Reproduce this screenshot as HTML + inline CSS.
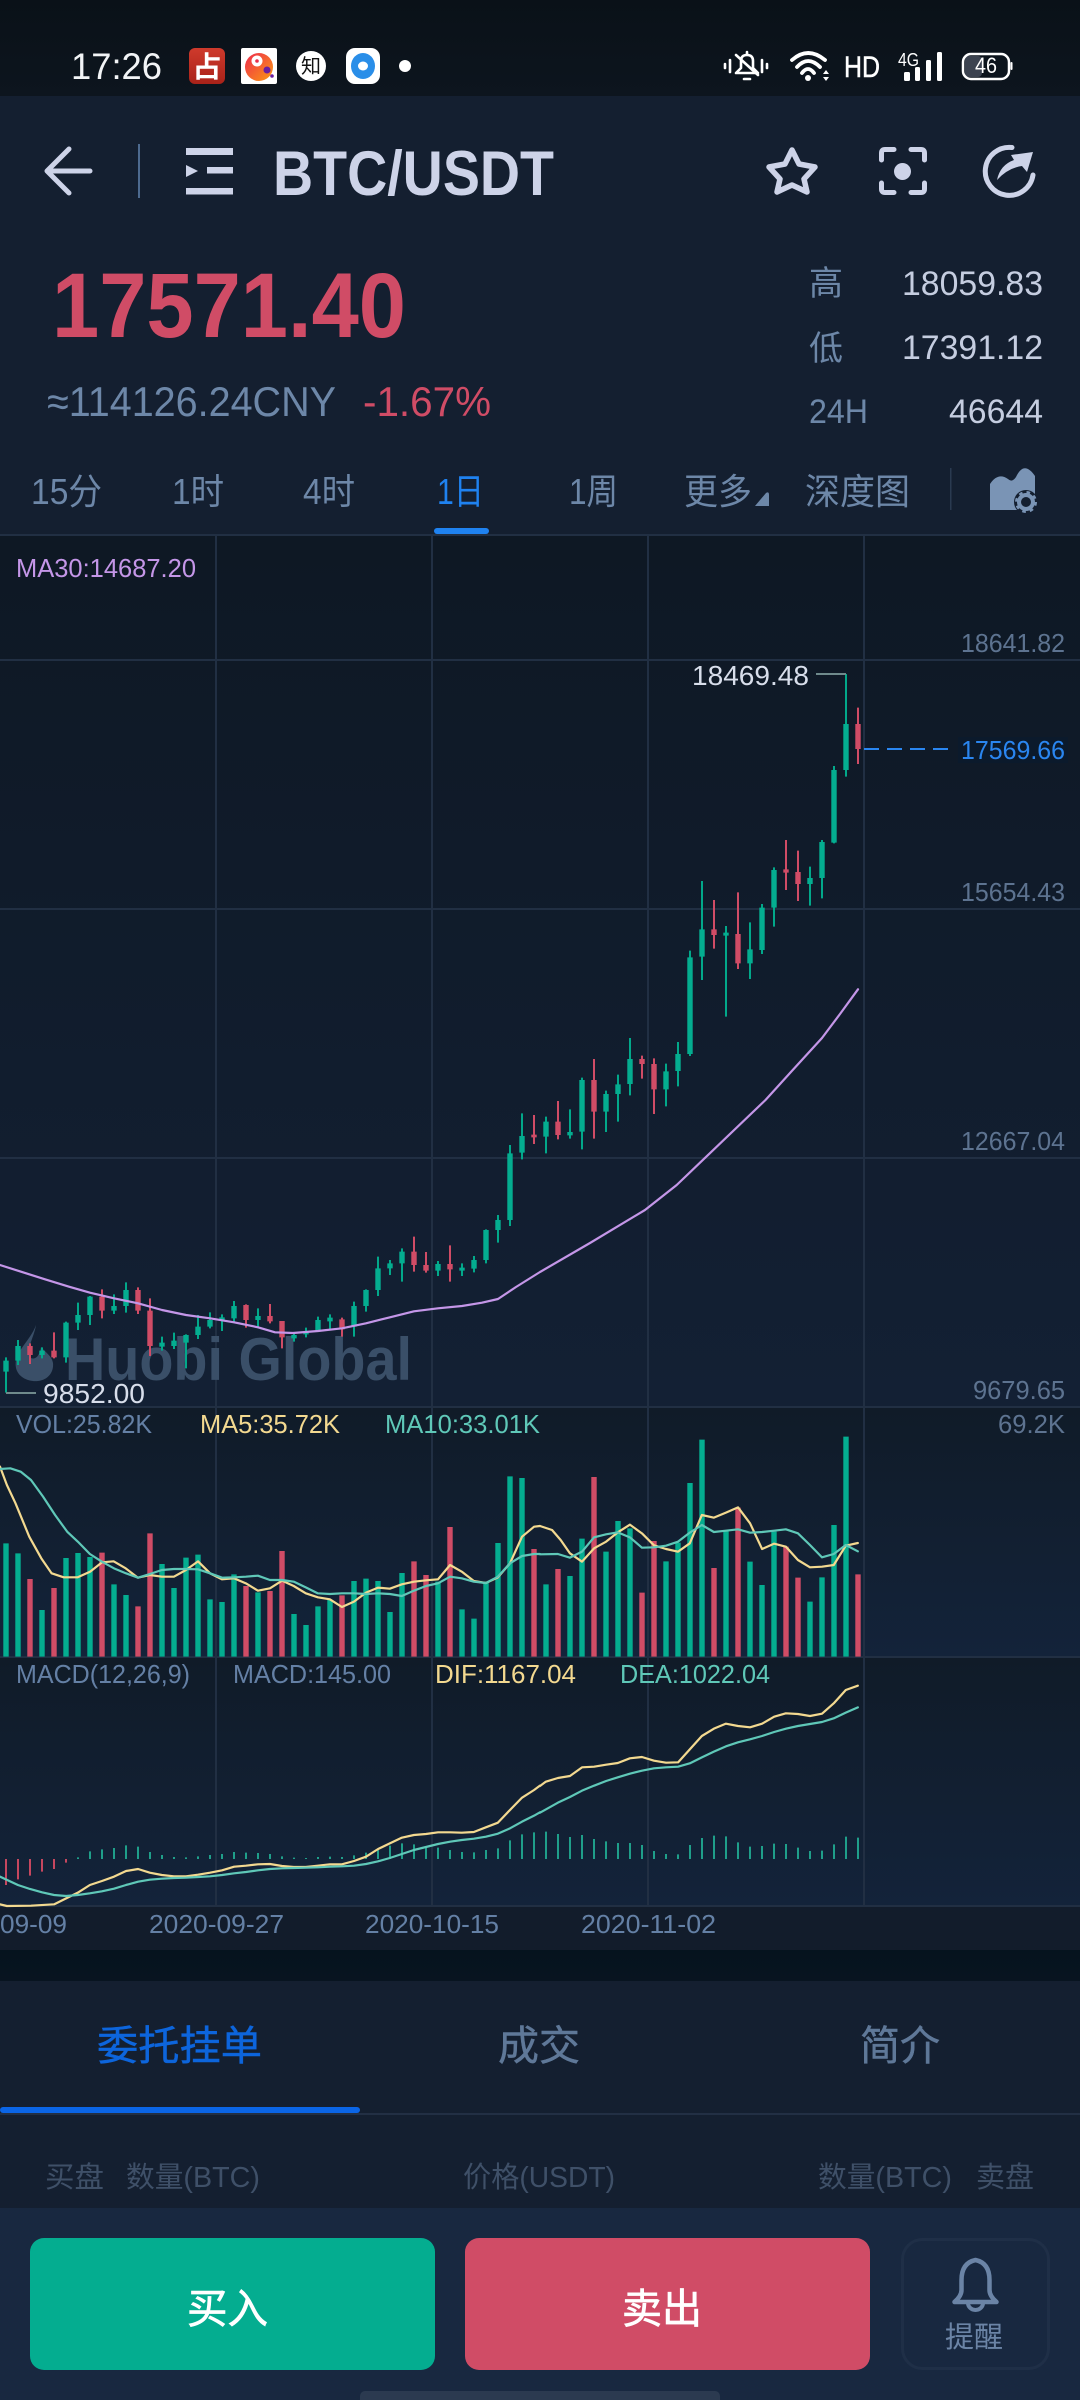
<!DOCTYPE html>
<html lang="zh-CN">
<head>
<meta charset="utf-8">
<title>BTC/USDT</title>
<style>
html,body{margin:0;padding:0;background:#141f30;width:1080px;height:2400px;overflow:hidden}
svg{display:block}
text{font-family:"Liberation Sans","Noto Sans CJK SC",sans-serif}
.ma{fill:none;stroke-width:2.2;stroke-linejoin:round;stroke-linecap:round;vector-effect:non-scaling-stroke}
</style>
</head>
<body>
<svg xmlns="http://www.w3.org/2000/svg" width="1080" height="2400" viewBox="0 0 1080 2400">
<defs>
<linearGradient id="gs" x1="0" y1="0" x2="0" y2="1"><stop offset="0" stop-color="#0a1118"/><stop offset="1" stop-color="#0d151e"/></linearGradient>
<linearGradient id="gc" x1="0" y1="0" x2="0" y2="1"><stop offset="0" stop-color="#0e1824"/><stop offset="1" stop-color="#132034"/></linearGradient>
<linearGradient id="gv" x1="0" y1="0" x2="0" y2="1"><stop offset="0" stop-color="#101b28"/><stop offset="1" stop-color="#13233a"/></linearGradient>
<linearGradient id="gb" x1="0" y1="0" x2="0" y2="1"><stop offset="0" stop-color="#05131e"/><stop offset="1" stop-color="#081420"/></linearGradient>
<linearGradient id="gr" x1="0" y1="0" x2="0" y2="1"><stop offset="0" stop-color="#cf3a2c"/><stop offset="1" stop-color="#a92219"/></linearGradient>
<linearGradient id="go" x1="0" y1="0" x2="1" y2="1"><stop offset="0" stop-color="#ee2a4e"/><stop offset="1" stop-color="#fb9a12"/></linearGradient>
</defs>

<!-- backgrounds -->
<rect width="1080" height="96" fill="url(#gs)"/>
<rect y="96" width="1080" height="439" fill="#141f30"/>
<rect y="535" width="1080" height="872" fill="url(#gc)"/>
<rect y="1407" width="1080" height="250" fill="url(#gv)"/>
<rect y="1657" width="1080" height="249" fill="url(#gv)"/>
<rect y="1906" width="1080" height="44" fill="#121c2b"/>
<rect y="1950" width="1080" height="31" fill="url(#gb)"/>
<rect y="1981" width="1080" height="227" fill="#141f30"/>
<rect y="2208" width="1080" height="192" fill="#182840"/>

<!-- status bar -->
<text x="71" y="79" font-size="37" fill="#f2f4f6" textLength="91" lengthAdjust="spacingAndGlyphs">17:26</text>
<rect x="189" y="48" width="36" height="36" rx="6" fill="url(#gr)"/>
<text x="207" y="77" font-size="29" font-weight="700" fill="#fff" text-anchor="middle">占</text>
<rect x="241" y="48" width="36" height="36" rx="2" fill="#fff"/>
<circle cx="259" cy="67" r="14" fill="url(#go)"/>
<circle cx="257" cy="61" r="5.5" fill="#fff"/><circle cx="257" cy="61" r="1.8" fill="#e8304a"/>
<circle cx="267" cy="70" r="3.5" fill="#6a1fa0"/><circle cx="272" cy="76" r="1.8" fill="#6a1fa0"/>
<circle cx="311" cy="66" r="15" fill="#fff"/>
<text x="311" y="73" font-size="20" fill="#111" text-anchor="middle">知</text>
<rect x="346" y="48" width="34" height="36" rx="9" fill="#fff"/>
<ellipse cx="363" cy="66" rx="12" ry="13" fill="#2a8ee8"/><ellipse cx="363" cy="66" rx="5" ry="4.5" fill="#fff"/>
<circle cx="405" cy="66" r="6" fill="#fff"/>

<g fill="none" stroke="#fff" stroke-width="2.6" stroke-linecap="round" stroke-linejoin="round">
<path d="M725 64V68M730 60V72M762 60V72M767 64V68"/>
<path d="M736 73L741 68V61Q741 55 747 55Q753 55 753 61V68L758 73Z"/>
<path d="M747 52V54M744 79H750"/>
<path d="M736 55L758 75"/>
</g>
<g fill="none" stroke="#fff" stroke-width="3.8" stroke-linecap="round">
<path d="M792 60Q808 46 825 60"/><path d="M797 67Q808 55 820 67"/><path d="M802 73Q808 65 814 73"/>
</g>
<circle cx="808" cy="78" r="3" fill="#fff"/>
<path d="M823 74L826 70L829 74ZM823 77H829L826 81Z" fill="#fff"/>
<text x="844" y="77" font-size="30" fill="#fff" stroke="#fff" stroke-width=".5" textLength="36" lengthAdjust="spacingAndGlyphs">HD</text>
<text x="898" y="66" font-size="18" fill="#fff" textLength="21" lengthAdjust="spacingAndGlyphs">4G</text>
<g fill="#fff"><rect x="904" y="72" width="6" height="9" rx="1.5"/><rect x="915" y="67" width="5" height="14" rx="1.5"/><rect x="926" y="60" width="5" height="21" rx="1.5"/><rect x="937" y="52" width="5" height="29" rx="1.5"/></g>
<rect x="965" y="56" width="17" height="21" rx="4" fill="#3c4350"/>
<rect x="963" y="54" width="46" height="25" rx="8" fill="none" stroke="#fff" stroke-width="2.5"/>
<rect x="1010.500" y="62" width="2" height="8" rx="1" fill="#fff"/>
<text x="975" y="73" font-size="22" fill="#fff" textLength="22" lengthAdjust="spacingAndGlyphs">46</text>

<!-- header -->
<g fill="none" stroke="#cdd3e8" stroke-width="5" stroke-linecap="round" stroke-linejoin="round">
<path d="M69 149L47 171L69 193M47 171H90"/>
<path stroke-width="5.500" d="M792 150L799 164L815 167L804 179L807 192L792 185L777 192L780 179L769 167L785 164Z"/>
<path d="M881.500 160V153q0-3.500 3.500-3.500H894M911 149.500H921q3.500 0 3.500 3.500V160M924.500 183V189q0 3.500-3.500 3.500H911M894 192.500H885q-3.500 0-3.500-3.500V183"/>
<path d="M1012 147.500A24 24 0 1 0 1033 175"/>
</g>
<rect x="138" y="144" width="2" height="54" fill="#4d6a8f"/>
<g fill="#cdd3e8">
<rect x="186" y="148" width="47" height="7"/><rect x="207" y="167" width="26" height="6.500"/><rect x="186" y="188" width="47" height="6.500"/>
<path d="M186 165L198 171L186 177Z"/>
<circle cx="902.500" cy="171.500" r="8.500"/>
<path d="M997 180Q1000 165 1014 160L1011 155L1033 152L1027 172L1022 166Q1008 168 997 180Z"/>
</g>
<text x="273" y="195" font-size="63" font-weight="700" fill="#cdd3e8" textLength="281" lengthAdjust="spacingAndGlyphs">BTC/USDT</text>

<text x="52" y="337" font-size="92" font-weight="700" fill="#d04c66" textLength="354" lengthAdjust="spacingAndGlyphs">17571.40</text>
<text x="47" y="416" font-size="42" fill="#6d87a8" textLength="289" lengthAdjust="spacingAndGlyphs">≈114126.24CNY</text>
<text x="363" y="416" font-size="42" fill="#d04c66" textLength="128" lengthAdjust="spacingAndGlyphs">-1.67%</text>

<text x="809" y="295" font-size="34" fill="#6d87a8">高</text>
<text x="809" y="360" font-size="34" fill="#6d87a8">低</text>
<text x="809" y="423" font-size="34" fill="#6d87a8" textLength="59" lengthAdjust="spacingAndGlyphs">24H</text>
<text x="902" y="295" font-size="34" fill="#c5cde0" textLength="141" lengthAdjust="spacingAndGlyphs">18059.83</text>
<text x="902" y="359" font-size="34" fill="#c5cde0" textLength="141" lengthAdjust="spacingAndGlyphs">17391.12</text>
<text x="949" y="423" font-size="34" fill="#c5cde0" textLength="94" lengthAdjust="spacingAndGlyphs">46644</text>

<!-- period tabs -->
<g font-size="36" fill="#6d87a8">
<text x="31" y="504" textLength="71" lengthAdjust="spacingAndGlyphs">15分</text>
<text x="172" y="504" textLength="52" lengthAdjust="spacingAndGlyphs">1时</text>
<text x="303" y="504" textLength="52" lengthAdjust="spacingAndGlyphs">4时</text>
<text x="437" y="504" fill="#1f82f0" textLength="47" lengthAdjust="spacingAndGlyphs">1日</text>
<text x="569" y="504" textLength="49" lengthAdjust="spacingAndGlyphs">1周</text>
<text x="684" y="504" textLength="68" lengthAdjust="spacingAndGlyphs">更多</text>
<text x="805" y="504" textLength="105" lengthAdjust="spacingAndGlyphs">深度图</text>
</g>
<path d="M755 506L766 493Q769 491 769 495V506Z" fill="#6d87a8"/>
<rect x="950" y="468" width="1.500" height="42" fill="#2a3a50"/>
<path d="M990 510V484Q998 472 1008 479Q1012 483 1016 477Q1024 460 1035 476V495L1018 510Z" fill="#7a94b5"/>
<circle cx="1026" cy="502" r="12" fill="#141f30"/>
<circle cx="1026" cy="502" r="7" fill="none" stroke="#7a94b5" stroke-width="4"/>
<circle cx="1026" cy="502" r="9.500" fill="none" stroke="#7a94b5" stroke-width="3" stroke-dasharray="3.500 4"/>
<rect x="434" y="528" width="55" height="6" rx="3" fill="#1f82f0"/>

<!-- grid -->
<g stroke="#212f43" stroke-width="2" fill="none">
<path d="M0 535H1080M0 660H1080M0 909H1080M0 1158H1080M0 1407H1080M0 1657H1080M0 1906H1080"/>
<path d="M216 535V1906M432 535V1906M648 535V1906M864 535V1906"/>
</g>

<!-- watermark -->
<path d="M36 1325C30 1342 13 1352 16 1368C18 1377 28 1382 38 1381C48 1380 54 1372 53 1363C52 1356 45 1352 41 1347C40 1355 36 1360 31 1358C25 1350 34 1338 36 1325Z" fill="#3a4f68"/>
<text x="65" y="1380" font-size="60" font-weight="700" fill="#3a4f68" textLength="347" lengthAdjust="spacingAndGlyphs">Huobi Global</text>

<!-- candles -->
<g transform="translate(0,1100) scale(1,.33333)" fill="none">
<path stroke="#02a88a" stroke-width="2" d="M6 772V878M18 720V795M42 742V775M66 665V788M78 608V690M90 588V675M114 583V642M126 547V638M162 710V752M174 698V747M186 703V805M198 645V717M210 637V685M222 643V693M234 603V665M258 625V680M294 700V725M306 683V712M318 650V695M330 643V690M354 605V710M366 568V635M378 470V588M390 480V525M402 445V545M438 483V528M462 490V528M474 468V517M486 388V490M498 345V428M510 135V378M522 40V178"/>
<path stroke="#04ad90" stroke-width="5.400" d="M6 782V815M18 738V782M42 752V765M66 668V772M78 645V668M90 590V645M114 618V632M126 570V618M162 728V740M174 722V738M186 705V728M198 680V705M210 660V680M222 652V662M234 618V655M258 648V660M294 705V715M306 695V703M318 660V692M330 653V664M354 618V680M366 570V618M378 505V570M390 490V505M402 455V490M438 492V512M462 503V512M474 480V506M486 390V480M498 360V390M510 160V360M522 108V158"/>
<path stroke="#d04c66" stroke-width="2" d="M30 730V792M54 697V775M102 568V655M138 562V642M150 595V768M246 613V683M270 612V670M282 663V745M342 653V710M414 410V515M426 456V518M450 436V545M534 45V132"/>
<path stroke="#d04c66" stroke-width="5.400" d="M30 738V765M54 752V772M102 590V632M138 570V632M150 632V738M246 615V660M270 648V664M282 663V712M342 658V688M414 455V495M426 495V512M450 492V508M534 104V112"/>
</g>
<g transform="translate(0,1040) scale(1,.33333)" fill="none">
<path stroke="#02a88a" stroke-width="2" d="M546 230V340M570 208V296M582 113V328M606 152V276M618 104V245M630 -6V166M666 71V199M678 6V139"/>
<path stroke="#04ad90" stroke-width="5.400" d="M546 245V290M570 276V286M582 120V275M606 162V215M618 133V162M630 57V132M666 94V148M678 42V93"/>
<path stroke="#d04c66" stroke-width="2" d="M558 183V298M594 57V296M642 47V116M654 55V222"/>
<path stroke="#d04c66" stroke-width="5.400" d="M558 245V285M594 120V215M642 57V72M654 72V148"/>
</g>
<g transform="translate(0,600) scale(1,.33333)" fill="none">
<path stroke="#02a88a" stroke-width="2" d="M690 1052V1368M702 843V1140M726 978V1250M750 967V1137M762 912V1062M774 802V980M810 800V917M822 720V895M834 498V730M846 222V530"/>
<path stroke="#04ad90" stroke-width="5.400" d="M690 1072V1362M702 988V1070M726 998V1007M750 1048V1090M762 923V1050M774 810V923M810 834V852M822 726V834M834 510V728M846 372V510"/>
<path stroke="#d04c66" stroke-width="2" d="M714 900V1046M738 877V1107M786 720V870M798 752V903M858 323V492"/>
<path stroke="#d04c66" stroke-width="5.400" d="M714 988V1005M738 1002V1090M786 808V818M798 816V852M858 372V447"/>
</g>

<!-- MA30 -->
<path class="ma" stroke="#c496e8" d="M0 1265L21 1271.700L45 1279.300L69 1286.700L90 1292.700L114 1298.300L138 1303.300L162 1310L186 1315L210 1318.300L234 1322.300L258 1327.300L275 1332.300L293 1333L318 1331L342 1328.300L366 1323.300L390 1317.300L414 1311.300L438 1308.300L462 1306L482 1302.700L498 1299L516 1287L540 1272L590 1243L645 1210L676.700 1185L700 1162.700L765.500 1100L790 1073L822 1038L840 1014L858 989.300"/>

<!-- hi/lo markers -->
<path d="M816 674H846" stroke="#6f8a8c" stroke-width="2" fill="none"/>
<path d="M6 1393H36" stroke="#6f8a8c" stroke-width="2" fill="none"/>
<text x="692" y="685" font-size="28" fill="#d8deeb" textLength="117" lengthAdjust="spacingAndGlyphs">18469.48</text>
<text x="43" y="1403" font-size="28" fill="#d8deeb" textLength="102" lengthAdjust="spacingAndGlyphs">9852.00</text>

<!-- axis labels -->
<text x="16" y="577" font-size="26" fill="#c496e8" textLength="180" lengthAdjust="spacingAndGlyphs">MA30:14687.20</text>
<g font-size="26" fill="#5d7390">
<text x="961" y="652" textLength="104" lengthAdjust="spacingAndGlyphs">18641.82</text>
<text x="961" y="901" textLength="104" lengthAdjust="spacingAndGlyphs">15654.43</text>
<text x="961" y="1150" textLength="104" lengthAdjust="spacingAndGlyphs">12667.04</text>
<text x="973" y="1399" textLength="92" lengthAdjust="spacingAndGlyphs">9679.65</text>
<text x="998" y="1433" textLength="67" lengthAdjust="spacingAndGlyphs">69.2K</text>
</g>
<rect x="958" y="737" width="110" height="26" fill="#0b1a2c"/>
<path d="M864 749H951" stroke="#2a86f0" stroke-width="2" stroke-dasharray="15 8" fill="none"/>
<text x="961" y="759" font-size="26" fill="#2a86f0" textLength="104" lengthAdjust="spacingAndGlyphs">17569.66</text>

<!-- volume -->
<g transform="translate(0,1400) scale(1,.33333)" fill="none" stroke-width="5.400">
<path stroke="#04ad90" d="M6 430V770M18 460V770M42 630V770M66 474V770M78 459V770M90 471V770M114 553V770M126 585V770M162 492V770M174 564V770M186 473V770M198 464V770M210 598V770M222 606V770M234 523V770M258 577V770M294 642V770M306 675V770M318 619V770M330 600V770M354 543V770M366 536V770M378 543V770M390 636V770M402 519V770M438 545V770M462 628V770M474 656V770M486 545V770M498 429V770M510 229V770M522 234V770M546 553V770M570 528V770M582 416V770M606 455V770M618 363V770M630 385V770M666 484V770M678 428V770M690 249V770M702 119V770M726 392V770M750 485V770M762 555V770M774 395V770M810 605V770M822 532V770M834 375V770M846 110V770"/>
<path stroke="#d04c66" d="M30 537V770M54 564V770M102 458V770M138 619V770M150 400V770M246 558V770M270 573V770M282 453V770M342 586V770M414 484V770M426 525V770M450 381V770M534 447V770M558 507V770M594 231V770M642 578V770M654 423V770M714 504V770M738 323V770M786 440V770M798 533V770M858 523V770"/>
</g>
<g transform="translate(0,1400) scale(.34435,.33333)">
<path class="ma" stroke="#f3d990" d="M0 200L20 255L45 310L85 410L120 475L150 520L185 532L225 532L262 515L296 487L330 484L365 505L400 533L435 525L470 530L505 530L540 510L575 484L610 520L645 538L680 535L714 550L749 572L784 565L819 542L853 558L888 580L923 592L958 598L993 621L1028 605L1063 578L1098 563L1132 566L1167 553L1202 545L1237 541L1272 538L1307 495L1341 515L1376 543L1411 549L1446 532L1481 490L1516 410L1551 380L1568 378"/>
<path class="ma" stroke="#5fc8b8" d="M0 207L30 205L60 215L90 240L125 290L160 345L195 395L226 425L261 462L296 485L331 505L366 520L401 533L435 522L470 510L505 507L540 507L575 508L610 520L645 533L680 532L714 530L749 527L784 540L819 540L853 545L888 562L923 580L958 582L993 580L1028 580L1063 582L1098 580L1132 582L1167 588L1202 572L1237 558L1272 550L1307 530L1341 535L1376 545L1411 549L1446 530L1481 490L1516 468L1551 462L1568 462"/>
</g>
<g transform="translate(540,1400) scale(.34435,.33333)">
<path class="ma" stroke="#f3d990" d="M0 378L35 390L60 420L87 460L122 485L157 445L192 425L226 397L261 374L296 400L331 436L366 447L401 455L435 430L470 345L505 353L540 338L575 322L610 370L645 447L680 431L714 440L749 480L784 502L819 500L853 495L888 437L923 429"/>
<path class="ma" stroke="#5fc8b8" d="M0 463L52 462L87 473L122 455L157 412L192 403L226 397L261 412L296 443L331 442L366 437L401 425L435 398L470 375L505 396L540 392L575 388L610 398L645 396L680 392L714 388L749 400L784 435L819 472L853 462L888 435L923 454"/>
</g>
<text x="16" y="1433" font-size="26" fill="#6480a5" textLength="136" lengthAdjust="spacingAndGlyphs">VOL:25.82K</text>
<text x="200" y="1433" font-size="26" fill="#f3d990" textLength="140" lengthAdjust="spacingAndGlyphs">MA5:35.72K</text>
<text x="385" y="1433" font-size="26" fill="#5fc8b8" textLength="155" lengthAdjust="spacingAndGlyphs">MA10:33.01K</text>

<!-- MACD -->
<g transform="translate(0,1650) scale(1,.33333)" fill="none" stroke-width="2">
<path stroke="#c6475f" d="M6 627V705M18 627V688M30 627V677M42 627V665M54 627V657M66 627V638"/>
<path stroke="#1f9f8a" d="M78 627V622M90 627V604M102 627V598M114 627V594M126 627V586M138 627V590M150 627V606M162 627V615M174 627V621M186 627V622M198 627V619M210 627V615M222 627V612M234 627V606M246 627V608M258 627V609M270 627V612M282 627V619M294 627V623M306 627V624M318 627V621M330 627V620M342 627V621M354 627V616M366 627V608M378 627V600M390 627V587M402 627V580M414 627V583M426 627V588M438 627V593M450 627V600M462 627V606M474 627V607M486 627V600M498 627V595M510 627V571M522 627V553M534 627V547M546 627V545M558 627V552M570 627V561M582 627V555M594 627V567M606 627V574M618 627V579M630 627V579M642 627V585M654 627V603M666 627V612M678 627V613M690 627V585M702 627V564M714 627V557M726 627V559M738 627V577M750 627V590M762 627V588M774 627V581M786 627V582M798 627V593M810 627V603M822 627V602M834 627V583M846 627V560M858 627V563"/>
</g>
<g transform="translate(0,1650) scale(.34435,.33333)">
<path class="ma" stroke="#f3d990" d="M0 763L20 768L90 767L157 763L192 745L226 728L261 705L296 693L331 680L366 663L401 657L435 668L470 675L505 679L540 679L575 674L610 668L645 661L680 650L714 647L749 643L784 642L819 648L853 651L888 651L923 647L958 643L993 643L1028 633L1063 620L1098 597L1132 580L1167 563L1202 555L1237 552L1272 547L1307 547L1341 548L1376 546L1411 532L1446 518L1481 480L1516 443L1551 420L1568 407"/>
<path class="ma" stroke="#5fc8b8" d="M0 680L52 705L87 717L122 727L157 735L192 738L226 735L261 730L296 724L331 716L366 705L401 695L435 689L470 686L505 684L540 683L575 681L610 679L645 675L680 670L714 666L749 661L784 657L819 655L853 654L888 653L923 652L958 650L993 649L1028 647L1063 642L1098 634L1132 624L1167 612L1202 600L1237 591L1272 582L1307 575L1341 570L1376 566L1411 560L1446 551L1481 535L1516 515L1551 497L1568 487"/>
</g>
<g transform="translate(540,1650) scale(.34435,.33333)">
<path class="ma" stroke="#f3d990" d="M0 408L17 395L52 384L87 378L122 352L157 350L192 344L226 339L261 325L296 321L331 332L366 338L401 337L435 298L470 258L505 236L540 221L575 228L610 232L645 221L680 200L714 190L749 192L784 198L819 191L853 160L888 120L923 107"/>
<path class="ma" stroke="#5fc8b8" d="M0 488L52 458L87 441L122 422L157 407L192 393L226 382L261 371L296 362L331 355L366 352L401 350L435 340L470 322L505 305L540 289L575 277L610 268L645 258L680 246L714 236L749 228L784 222L819 216L853 205L888 188L923 172"/>
</g>
<text x="16" y="1683" font-size="26" fill="#6480a5" textLength="174" lengthAdjust="spacingAndGlyphs">MACD(12,26,9)</text>
<text x="233" y="1683" font-size="26" fill="#6480a5" textLength="158" lengthAdjust="spacingAndGlyphs">MACD:145.00</text>
<text x="435" y="1683" font-size="26" fill="#f3d990" textLength="141" lengthAdjust="spacingAndGlyphs">DIF:1167.04</text>
<text x="620" y="1683" font-size="26" fill="#5fc8b8" textLength="150" lengthAdjust="spacingAndGlyphs">DEA:1022.04</text>

<!-- dates -->
<g font-size="26" fill="#6480a5">
<text x="0" y="1933" textLength="67" lengthAdjust="spacingAndGlyphs">09-09</text>
<text x="149" y="1933" textLength="135" lengthAdjust="spacingAndGlyphs">2020-09-27</text>
<text x="365" y="1933" textLength="134" lengthAdjust="spacingAndGlyphs">2020-10-15</text>
<text x="581" y="1933" textLength="135" lengthAdjust="spacingAndGlyphs">2020-11-02</text>
</g>

<!-- bottom tabs -->
<text x="97" y="2060" font-size="41" fill="#0d65dc" stroke="#0d65dc" stroke-width=".5" textLength="165" lengthAdjust="spacingAndGlyphs">委托挂单</text>
<text x="498" y="2060" font-size="41" fill="#5f7898" stroke="#5f7898" stroke-width=".5" textLength="82" lengthAdjust="spacingAndGlyphs">成交</text>
<text x="860" y="2060" font-size="41" fill="#5f7898" stroke="#5f7898" stroke-width=".5" textLength="80" lengthAdjust="spacingAndGlyphs">简介</text>
<rect y="2113" width="1080" height="2" fill="#222f44"/>
<rect x="0" y="2107" width="360" height="6" rx="3" fill="#0b65e6"/>
<g font-size="29" fill="#3f5068">
<text x="45" y="2187" textLength="59" lengthAdjust="spacingAndGlyphs">买盘</text>
<text x="126" y="2187" textLength="134" lengthAdjust="spacingAndGlyphs">数量(BTC)</text>
<text x="463" y="2187" textLength="152" lengthAdjust="spacingAndGlyphs">价格(USDT)</text>
<text x="818" y="2187" textLength="134" lengthAdjust="spacingAndGlyphs">数量(BTC)</text>
<text x="976" y="2187" textLength="58" lengthAdjust="spacingAndGlyphs">卖盘</text>
</g>

<!-- action bar -->
<rect x="30" y="2238" width="405" height="132" rx="14" fill="#04ad90"/>
<rect x="465" y="2238" width="405" height="132" rx="14" fill="#d04c66"/>
<text x="187" y="2323" font-size="41" fill="#fff" stroke="#fff" stroke-width=".7" textLength="81" lengthAdjust="spacingAndGlyphs">买入</text>
<text x="622" y="2323" font-size="41" fill="#fff" stroke="#fff" stroke-width=".7" textLength="80" lengthAdjust="spacingAndGlyphs">卖出</text>
<rect x="902.500" y="2239.500" width="146" height="129" rx="20" fill="none" stroke="#1f2f47" stroke-width="3"/>
<path d="M975.500 2260q-14 3-14 20v10q0 6-7 12h42q-7-6-7-12v-10q0-17-14-20z" fill="none" stroke="#6b84a6" stroke-width="4.500" stroke-linejoin="round"/>
<path d="M968 2303a7.500 7 0 0 0 15 0" fill="none" stroke="#6b84a6" stroke-width="4"/>
<text x="945" y="2347" font-size="29" fill="#6b84a6" textLength="58" lengthAdjust="spacingAndGlyphs">提醒</text>
<rect x="360" y="2391" width="360" height="18" rx="5" fill="#2b3a50"/>
</svg>
</body>
</html>
